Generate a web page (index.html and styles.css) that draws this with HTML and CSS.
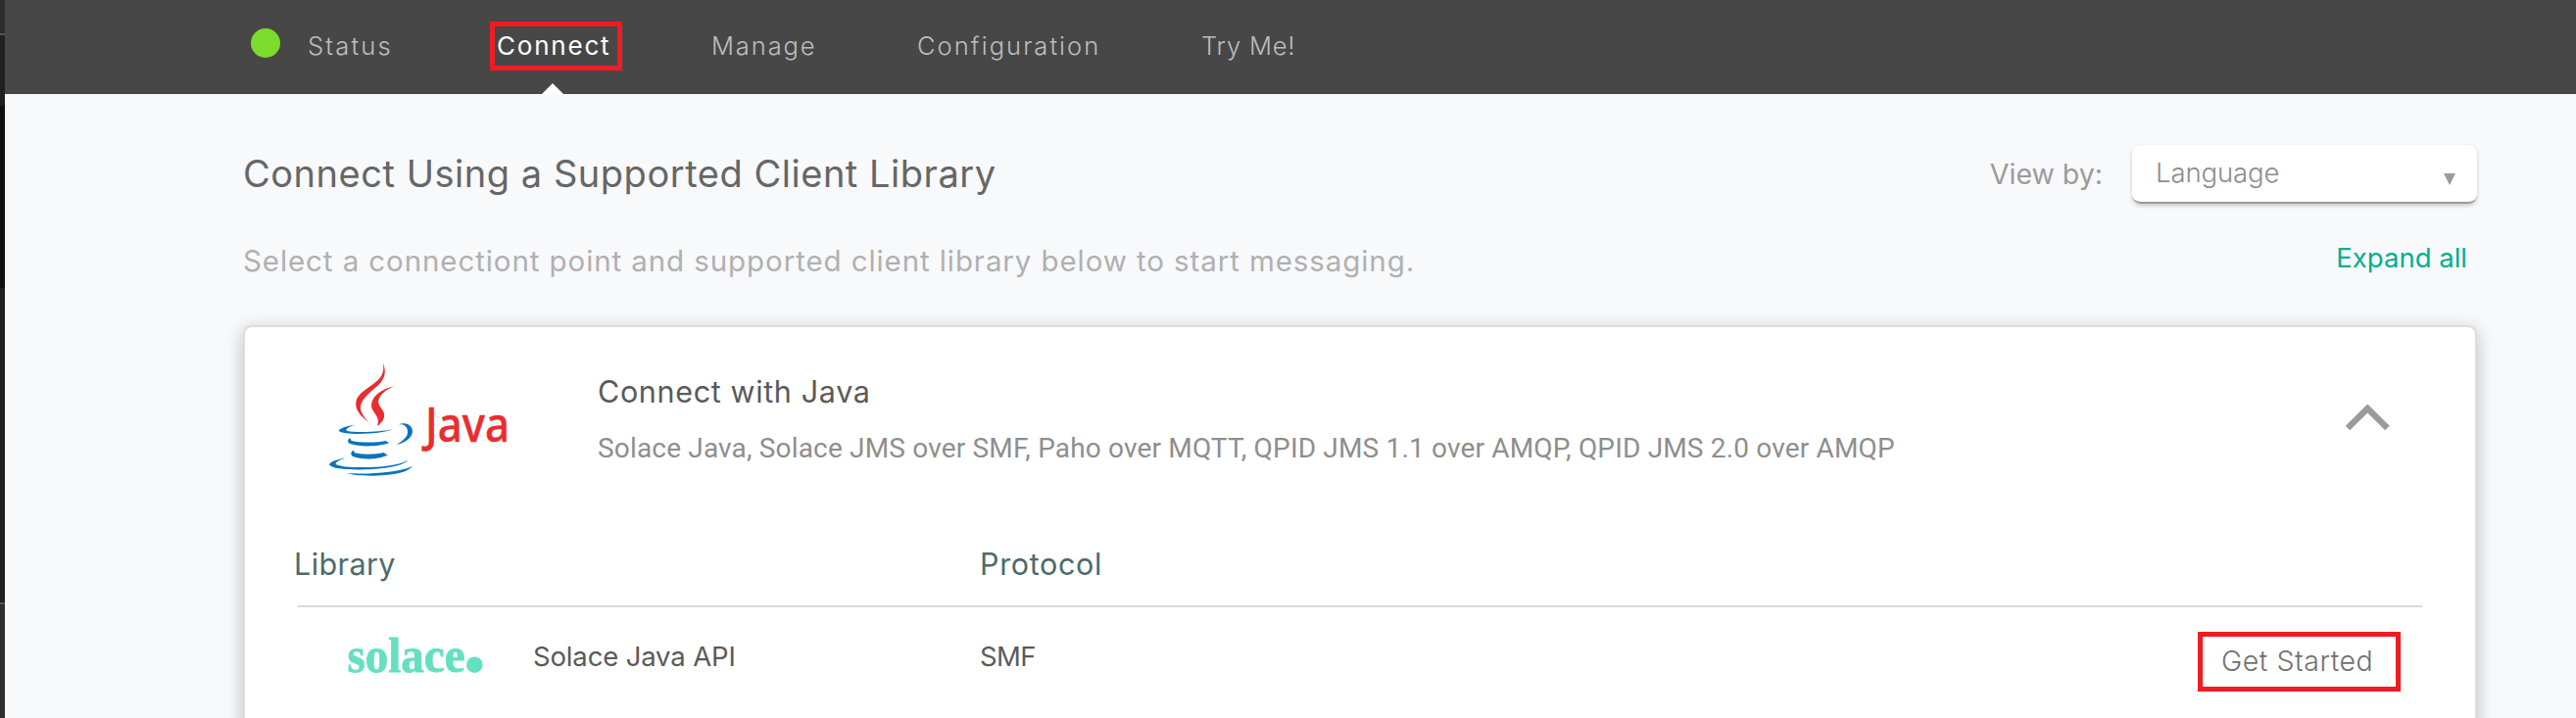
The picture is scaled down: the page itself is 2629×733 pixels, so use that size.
FILE: index.html
```html
<!DOCTYPE html>
<html lang="en">
<head>
<meta charset="utf-8">
<title>Connect</title>
<link rel="stylesheet" href="styles.css">
</head>
<body>
<div class="app">
  <aside class="rail"></aside>
  <div class="page">
    <nav class="nav">
      <span class="dot"></span>
      <a class="tab status">Status</a>
      <a class="tab active">Connect</a>
      <a class="tab manage">Manage</a>
      <a class="tab">Configuration</a>
      <a class="tab tryme">Try Me!</a>
    </nav>
    <main class="main">
      <div class="heading">
        <h1 class="title">Connect Using a Supported Client Library</h1>
        <div class="viewby">
          <span class="viewby-label">View by:</span>
          <div class="select">
            <span class="select-value">Language</span>
            <svg class="select-arrow" width="12" height="12" viewBox="0 0 12 12"><path d="M0 0H12L6 12Z" fill="#9b9b9b"/></svg>
          </div>
        </div>
      </div>
      <div class="subheading">
        <p class="subtitle">Select a connectiont point and supported client library below to start messaging.</p>
        <a class="expand">Expand all</a>
      </div>
      <section class="card">
        <header class="card-head">
          <svg class="java" width="200" height="135" viewBox="0 0 200 135">
            <g transform="scale(.33333)">
              <g fill="#e92d2f">
                <path d="M197 31C210 60 204 84 174 108C140 136 124 154 130 178C136 195 146 205 155 214C130 196 108 172 116 146C126 114 180 98 194 68C200 56 200 45 197 31Z"/>
                <path d="M231 103C195 112 165 130 162 160C161 185 192 192 180 225C198 212 207 195 198 179C190 165 182 160 184 146C189 127 207 115 231 103Z"/>
              </g>
              <g fill="#0a74bd">
                <path d="M110 221C88 224 66 231 62 239C72 253 190 252 227 235C190 243 115 247 86 239C82 233 95 227 110 221Z"/>
                <path d="M246 220C262 213 287 218 288 241C288 262 262 278 239 282C262 268 275 255 273 240C271 224 260 219 246 220Z"/>
                <path d="M97 261C88 266 88 275 97 279C125 290 190 288 216 277L206 270C175 276 130 276 102 270C98 267 98 264 97 261Z"/>
                <path d="M108 299C98 303 97 313 106 318C130 329 185 327 212 314L200 306C175 312 130 313 110 306Z"/>
                <path d="M82 323C60 325 34 335 33 343C42 360 120 360 165 357C220 353 270 342 272 329C255 343 200 350 150 351C110 352 65 350 53 341C52 335 65 328 82 323Z"/>
                <path d="M87 369C140 373 240 370 287 348C275 368 220 377 160 377C125 377 100 374 87 369Z"/>
              </g>
            </g>
            <text class="java-word" x="109" y="91" textLength="86" lengthAdjust="spacingAndGlyphs">Java</text>
          </svg>
          <div class="card-text">
            <h2 class="card-title">Connect with Java</h2>
            <p class="card-desc">Solace Java, Solace JMS over SMF, Paho over MQTT, QPID JMS 1.1 over AMQP, QPID JMS 2.0 over AMQP</p>
          </div>
          <svg class="chevron" width="50" height="34" viewBox="0 0 50 34"><path d="M5 29L25.300 9L45.500 29" fill="none" stroke="#9b9b9b" stroke-width="6.500"/></svg>
        </header>
        <div class="columns">
          <span class="column library">Library</span>
          <span class="column protocol">Protocol</span>
        </div>
        <div class="row">
          <svg class="solace" width="145" height="50" viewBox="0 0 145 50">
            <text class="solace-word" x="2.500" y="40" textLength="120" lengthAdjust="spacingAndGlyphs">solace</text>
            <circle cx="132.300" cy="32.700" r="8.300" fill="#66dfc1"/>
          </svg>
          <span class="cell api">Solace Java API</span>
          <span class="cell smf">SMF</span>
          <a class="start">Get Started</a>
        </div>
      </section>
    </main>
  </div>
</div>
</body>
</html>
```

FILE: styles.css
```css
*, *::before, *::after { box-sizing: border-box; }
body {
  margin: 0;
  font-family: Inter, Roboto, "Liberation Sans", sans-serif;
  background: #f8f9fb;
}
h1, h2, p { margin: 0; font-weight: 400; }
.app { display: flex; height: 733px; overflow: hidden; }
.rail {
  flex: none;
  width: 5px;
  background: linear-gradient(#2d2d2d 34px, #555 34px 36px, #202020 36px 108px, #101010 108px 294px, #202020 294px 615px, #555 615px 617px, #2d2d2d 617px);
}
.page { flex: 1; min-width: 0; }

.nav {
  display: grid;
  grid-template-columns: 58px 193px 219px 210px 290px 1fr;
  align-items: center;
  height: 96px;
  padding-left: 251px;
  background: #474747;
}
.dot { width: 30px; height: 30px; margin-bottom: 8px; border-radius: 50%; background: #7bdc2b; }
.tab {
  position: relative;
  padding-bottom: 2px;
  line-height: 38px;
  font-size: 25.5px;
  font-weight: 300;
  letter-spacing: 2.05px;
  color: #bdbdbd;
}
.status { letter-spacing: 2.2px; }
.manage { letter-spacing: 1.9px; }
.tryme { letter-spacing: .8px; }
.active { font-size: 26px; letter-spacing: 1.8px; font-weight: 400; color: #fff; }
.active::before {
  content: "";
  position: absolute;
  left: -7px;
  top: -6px;
  width: 135px;
  height: 50px;
  border: 5px solid #ee1c23;
}
.active::after {
  content: "";
  position: absolute;
  left: 46px;
  top: 57px;
  border: 11px solid transparent;
  border-top-width: 0;
  border-bottom-color: #fff;
}

.main { padding: 52px 101px 0 243px; }
.heading { display: flex; justify-content: space-between; height: 60px; }
.title { font-size: 38px; line-height: 59px; letter-spacing: .53px; color: #666; }
.viewby { display: flex; gap: 30px; }
.viewby-label { font-size: 28.5px; line-height: 59px; color: #9b9b9b; }
.select {
  display: flex;
  justify-content: space-between;
  width: 352px;
  height: 60px;
  padding: 0 22px 0 24px;
  border-bottom: 2px solid #9b9b9b;
  border-radius: 9px;
  background: #fff;
  box-shadow: 0 2px 4px rgba(0, 0, 0, .2);
}
.select-value { font-size: 27.5px; font-weight: 300; line-height: 56px; letter-spacing: -.1px; color: #8c8c8c; }
.select-arrow { margin-top: 29px; }
.subheading { display: flex; justify-content: space-between; height: 124px; padding: 38px 10px 0 0; }
.subtitle { font-size: 29.5px; line-height: 40px; letter-spacing: .91px; color: #b0b0b0; }
.expand { font-size: 27.5px; line-height: 34px; color: #00ae91; }

.card {
  height: 440px;
  border: 2px solid #dcdcdc;
  border-radius: 9px;
  background: #fff;
  box-shadow: 0 4px 18px rgba(0, 0, 0, .24);
}
.card-head { display: flex; height: 218px; padding: 26px 85px 0 75px; }
.java { flex: none; }
.java-word { font: 500 49px "Noto Sans", sans-serif; fill: #e92d2f; stroke: #e92d2f; stroke-width: .5px; }
.card-text { flex: 1; padding: 20px 0 0 84px; }
.card-title { padding-left: 1px; font-size: 30.5px; line-height: 40px; letter-spacing: .65px; color: #5a5a5a; }
.card-desc { padding: 18px 0 0 1px; font-family: Roboto, sans-serif; font-size: 28px; line-height: 40px; letter-spacing: .17px; white-space: nowrap; color: #8e8e8e; }
.chevron { flex: none; margin-top: 48px; }
.columns {
  display: grid;
  grid-template-columns: 698px 1fr;
  height: 68px;
  margin: 0 54px;
  border-bottom: 2px solid #dadada;
}
.column { font-size: 30.5px; line-height: 48px; color: #4c6b6b; }
.library { margin-left: -4px; letter-spacing: .4px; }
.protocol { margin-left: -2px; letter-spacing: .65px; }
.row {
  display: grid;
  grid-template-columns: 192px 456px 1243px 1fr;
  padding: 25px 0 0 102px;
}
.solace { margin-top: 1px; }
.solace-word { font: bold 50px "Liberation Serif", serif; fill: #66dfc1; stroke: #66dfc1; stroke-width: .8px; }
.cell { font-size: 27.5px; line-height: 50px; color: #5a5a5a; }
.api { letter-spacing: -.15px; }
.smf { letter-spacing: -.6px; }
.start {
  width: 207px;
  height: 61px;
  padding-left: 19px;
  border: 5px solid #ee1c23;
  font-size: 28.5px;
  font-weight: 300;
  line-height: 49px;
  letter-spacing: .55px;
  color: #707070;
}
```
